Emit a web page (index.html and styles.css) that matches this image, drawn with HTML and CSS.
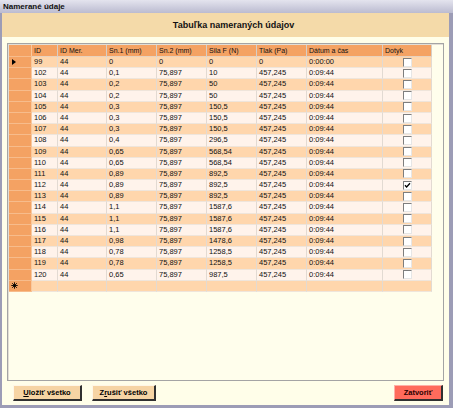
FILE: index.html
```html
<!DOCTYPE html>
<html lang="sk">
<head>
<meta charset="utf-8">
<title>Namerané údaje</title>
<link rel="stylesheet" href="styles.css">
</head>
<body>
<div class="window">
  <div class="titlebar">Namerané údaje</div>
  <div class="frame">
    <div class="banner">Tabuľka nameraných údajov</div>
    <div class="content">
      <div class="grid">
        <div class="row head">
          <div class="rh"></div>
          <div class="c c-id">ID</div>
          <div class="c c-idm">ID Mer.</div>
          <div class="c c-n">Sn.1 (mm)</div>
          <div class="c c-n">Sn.2 (mm)</div>
          <div class="c c-n">Sila F (N)</div>
          <div class="c c-n">Tlak (Pa)</div>
          <div class="c c-dat">Dátum a čas</div>
          <div class="c c-dot">Dotyk</div>
        </div>
        <div class="row a">
          <div class="rh"><svg class="cur" width="4" height="6" viewBox="0 0 4 6"><polygon points="0,0 4,3 0,6" fill="#000"/></svg></div>
          <div class="c c-id">99</div><div class="c c-idm">44</div><div class="c c-n">0</div><div class="c c-n">0</div><div class="c c-n">0</div><div class="c c-n">0</div><div class="c c-dat">0:00:00</div><div class="c c-dot"><span class="chk"></span></div>
        </div>
        <div class="row b">
          <div class="rh"></div>
          <div class="c c-id">102</div><div class="c c-idm">44</div><div class="c c-n">0,1</div><div class="c c-n">75,897</div><div class="c c-n">10</div><div class="c c-n">457,245</div><div class="c c-dat">0:09:44</div><div class="c c-dot"><span class="chk"></span></div>
        </div>
        <div class="row a">
          <div class="rh"></div>
          <div class="c c-id">103</div><div class="c c-idm">44</div><div class="c c-n">0,2</div><div class="c c-n">75,897</div><div class="c c-n">50</div><div class="c c-n">457,245</div><div class="c c-dat">0:09:44</div><div class="c c-dot"><span class="chk"></span></div>
        </div>
        <div class="row b">
          <div class="rh"></div>
          <div class="c c-id">104</div><div class="c c-idm">44</div><div class="c c-n">0,2</div><div class="c c-n">75,897</div><div class="c c-n">50</div><div class="c c-n">457,245</div><div class="c c-dat">0:09:44</div><div class="c c-dot"><span class="chk"></span></div>
        </div>
        <div class="row a">
          <div class="rh"></div>
          <div class="c c-id">105</div><div class="c c-idm">44</div><div class="c c-n">0,3</div><div class="c c-n">75,897</div><div class="c c-n">150,5</div><div class="c c-n">457,245</div><div class="c c-dat">0:09:44</div><div class="c c-dot"><span class="chk"></span></div>
        </div>
        <div class="row b">
          <div class="rh"></div>
          <div class="c c-id">106</div><div class="c c-idm">44</div><div class="c c-n">0,3</div><div class="c c-n">75,897</div><div class="c c-n">150,5</div><div class="c c-n">457,245</div><div class="c c-dat">0:09:44</div><div class="c c-dot"><span class="chk"></span></div>
        </div>
        <div class="row a">
          <div class="rh"></div>
          <div class="c c-id">107</div><div class="c c-idm">44</div><div class="c c-n">0,3</div><div class="c c-n">75,897</div><div class="c c-n">150,5</div><div class="c c-n">457,245</div><div class="c c-dat">0:09:44</div><div class="c c-dot"><span class="chk"></span></div>
        </div>
        <div class="row b">
          <div class="rh"></div>
          <div class="c c-id">108</div><div class="c c-idm">44</div><div class="c c-n">0,4</div><div class="c c-n">75,897</div><div class="c c-n">296,5</div><div class="c c-n">457,245</div><div class="c c-dat">0:09:44</div><div class="c c-dot"><span class="chk"></span></div>
        </div>
        <div class="row a">
          <div class="rh"></div>
          <div class="c c-id">109</div><div class="c c-idm">44</div><div class="c c-n">0,65</div><div class="c c-n">75,897</div><div class="c c-n">568,54</div><div class="c c-n">457,245</div><div class="c c-dat">0:09:44</div><div class="c c-dot"><span class="chk"></span></div>
        </div>
        <div class="row b">
          <div class="rh"></div>
          <div class="c c-id">110</div><div class="c c-idm">44</div><div class="c c-n">0,65</div><div class="c c-n">75,897</div><div class="c c-n">568,54</div><div class="c c-n">457,245</div><div class="c c-dat">0:09:44</div><div class="c c-dot"><span class="chk"></span></div>
        </div>
        <div class="row a">
          <div class="rh"></div>
          <div class="c c-id">111</div><div class="c c-idm">44</div><div class="c c-n">0,89</div><div class="c c-n">75,897</div><div class="c c-n">892,5</div><div class="c c-n">457,245</div><div class="c c-dat">0:09:44</div><div class="c c-dot"><span class="chk"></span></div>
        </div>
        <div class="row b">
          <div class="rh"></div>
          <div class="c c-id">112</div><div class="c c-idm">44</div><div class="c c-n">0,89</div><div class="c c-n">75,897</div><div class="c c-n">892,5</div><div class="c c-n">457,245</div><div class="c c-dat">0:09:44</div><div class="c c-dot"><span class="chk"><svg width="7" height="7" viewBox="0 0 7 7"><polyline points="1,3.2 2.6,5 6,1.2" fill="none" stroke="#000" stroke-width="1.3"/></svg></span></div>
        </div>
        <div class="row a">
          <div class="rh"></div>
          <div class="c c-id">113</div><div class="c c-idm">44</div><div class="c c-n">0,89</div><div class="c c-n">75,897</div><div class="c c-n">892,5</div><div class="c c-n">457,245</div><div class="c c-dat">0:09:44</div><div class="c c-dot"><span class="chk"></span></div>
        </div>
        <div class="row b">
          <div class="rh"></div>
          <div class="c c-id">114</div><div class="c c-idm">44</div><div class="c c-n">1,1</div><div class="c c-n">75,897</div><div class="c c-n">1587,6</div><div class="c c-n">457,245</div><div class="c c-dat">0:09:44</div><div class="c c-dot"><span class="chk"></span></div>
        </div>
        <div class="row a">
          <div class="rh"></div>
          <div class="c c-id">115</div><div class="c c-idm">44</div><div class="c c-n">1,1</div><div class="c c-n">75,897</div><div class="c c-n">1587,6</div><div class="c c-n">457,245</div><div class="c c-dat">0:09:44</div><div class="c c-dot"><span class="chk"></span></div>
        </div>
        <div class="row b">
          <div class="rh"></div>
          <div class="c c-id">116</div><div class="c c-idm">44</div><div class="c c-n">1,1</div><div class="c c-n">75,897</div><div class="c c-n">1587,6</div><div class="c c-n">457,245</div><div class="c c-dat">0:09:44</div><div class="c c-dot"><span class="chk"></span></div>
        </div>
        <div class="row a">
          <div class="rh"></div>
          <div class="c c-id">117</div><div class="c c-idm">44</div><div class="c c-n">0,98</div><div class="c c-n">75,897</div><div class="c c-n">1478,6</div><div class="c c-n">457,245</div><div class="c c-dat">0:09:44</div><div class="c c-dot"><span class="chk"></span></div>
        </div>
        <div class="row b">
          <div class="rh"></div>
          <div class="c c-id">118</div><div class="c c-idm">44</div><div class="c c-n">0,78</div><div class="c c-n">75,897</div><div class="c c-n">1258,5</div><div class="c c-n">457,245</div><div class="c c-dat">0:09:44</div><div class="c c-dot"><span class="chk"></span></div>
        </div>
        <div class="row a">
          <div class="rh"></div>
          <div class="c c-id">119</div><div class="c c-idm">44</div><div class="c c-n">0,78</div><div class="c c-n">75,897</div><div class="c c-n">1258,5</div><div class="c c-n">457,245</div><div class="c c-dat">0:09:44</div><div class="c c-dot"><span class="chk"></span></div>
        </div>
        <div class="row b">
          <div class="rh"></div>
          <div class="c c-id">120</div><div class="c c-idm">44</div><div class="c c-n">0,65</div><div class="c c-n">75,897</div><div class="c c-n">987,5</div><div class="c c-n">457,245</div><div class="c c-dat">0:09:44</div><div class="c c-dot"><span class="chk"></span></div>
        </div>
        <div class="row a">
          <div class="rh"><svg class="star" width="7" height="7" viewBox="0 0 7 7"><g stroke="#000" stroke-width="0.9"><line x1="3.5" y1="0.3" x2="3.5" y2="6.7"/><line x1="0.3" y1="3.5" x2="6.7" y2="3.5"/><line x1="1.2" y1="1.2" x2="5.8" y2="5.8"/><line x1="5.8" y1="1.2" x2="1.2" y2="5.8"/></g></svg></div>
          <div class="c c-id"></div><div class="c c-idm"></div><div class="c c-n"></div><div class="c c-n"></div><div class="c c-n"></div><div class="c c-n"></div><div class="c c-dat"></div><div class="c c-dot"></div>
        </div>
      </div>
      <div class="footer">
        <button class="btn btn-save"><u>U</u>ložiť všetko</button>
        <button class="btn btn-cancel">Z<u>r</u>ušiť všetko</button>
        <button class="btn btn-close">Zatvoriť</button>
      </div>
    </div>
  </div>
</div>
</body>
</html>
```

FILE: styles.css
```css
* { box-sizing: border-box; }
html, body { margin: 0; padding: 0; }
body {
  width: 453px;
  height: 408px;
  overflow: hidden;
  font-family: "Liberation Sans", Arial, sans-serif;
  color: #000;
  background: #9A9AB4;
}
.window {
  display: flex;
  flex-direction: column;
  width: 453px;
  height: 408px;
}
.titlebar {
  height: 13px;
  flex: none;
  background: linear-gradient(#E4E4EE, #BBBBD0);
  font-size: 8px;
  font-weight: bold;
  line-height: 13px;
  padding-left: 3px;
  color: #101010;
}
.frame {
  flex: 1;
  display: flex;
  flex-direction: column;
  border-left: 2px solid #9C9CB6;
  border-right: 4px solid #9C9CB6;
  border-bottom: 3px solid #9C9CB6;
  background: #FFFEE9;
}
.banner {
  height: 24px;
  flex: none;
  background: #F4DAA9;
  font-size: 9px;
  font-weight: bold;
  line-height: 24px;
  text-align: center;
  padding-left: 16px;
  color: #111;
}
.content {
  flex: 1;
  display: flex;
  flex-direction: column;
  padding: 6px 5px 4px 5px;
}
.grid {
  height: 338px;
  flex: none;
  border: 1px solid #A4A4A4;
  padding: 1px;
  background: #FFFEEC;
  box-shadow: inset 1px 1px 0 #E2DED6;
}
.row {
  display: flex;
  height: 11.2px;
}
.row.head {
  height: 12px;
}
.rh {
  width: 23px;
  flex: none;
  background: #F4A263;
  border-right: 1px solid #F8C89E;
  border-bottom: 1px solid #F7BC8C;
  display: flex;
  align-items: center;
  padding-left: 3px;
}
.c {
  flex: none;
  padding-left: 2px;
  border-right: 1px solid #E2DAD2;
  border-bottom: 1px solid #EFE5DB;
  font-size: 7.5px;
  line-height: 10.2px;
  white-space: nowrap;
  overflow: hidden;
  color: #111;
}
.head .c {
  background: #F4A263;
  border-right: 1px solid #D6CEC6;
  border-bottom: 1px solid #E8D2BE;
  font-size: 7px;
  line-height: 11px;
}
.row.a .c { background: #FFD6AC; }
.row.b .c { background: #FFF3EB; }
.c-id { width: 26px; }
.c-idm { width: 49px; }
.c-n { width: 50px; }
.c-dat { width: 76px; }
.c-dot {
  width: 49px;
  display: flex;
  align-items: center;
  justify-content: center;
  padding-left: 1px;
}
.head .c-dot { display: block; padding-left: 2px; }
.chk {
  width: 9px;
  height: 9px;
  background: #FFFFFF;
  border-top: 1px solid #7E7E7E;
  border-left: 1px solid #7E7E7E;
  border-right: 1px solid #E6E6E6;
  border-bottom: 1px solid #E6E6E6;
  display: flex;
  align-items: center;
  justify-content: center;
}
.cur { display: block; }
.star { display: block; margin-left: -1px; }
.footer {
  display: flex;
  align-items: center;
  margin-top: 4px;
  height: 16px;
  padding: 0 1px 0 6px;
}
.btn {
  height: 16px;
  margin: 0;
  padding: 0;
  font-family: "Liberation Sans", Arial, sans-serif;
  font-size: 7.5px;
  font-weight: bold;
  color: #000;
  border-top: 1px solid #FFF6E6;
  border-left: 1px solid #FFF6E6;
  border-right: 2px solid #303030;
  border-bottom: 2px solid #303030;
  background: #F6D4A4;
}
.btn u { text-decoration: underline; }
.btn-save { width: 69px; }
.btn-cancel { width: 64px; margin-left: 10px; }
.btn-close {
  width: 49px;
  margin-left: auto;
  background: #FF6B5C;
  color: #2A0000;
  border-top: 1px solid #FFB0A8;
  border-left: 1px solid #FFB0A8;
}
```
